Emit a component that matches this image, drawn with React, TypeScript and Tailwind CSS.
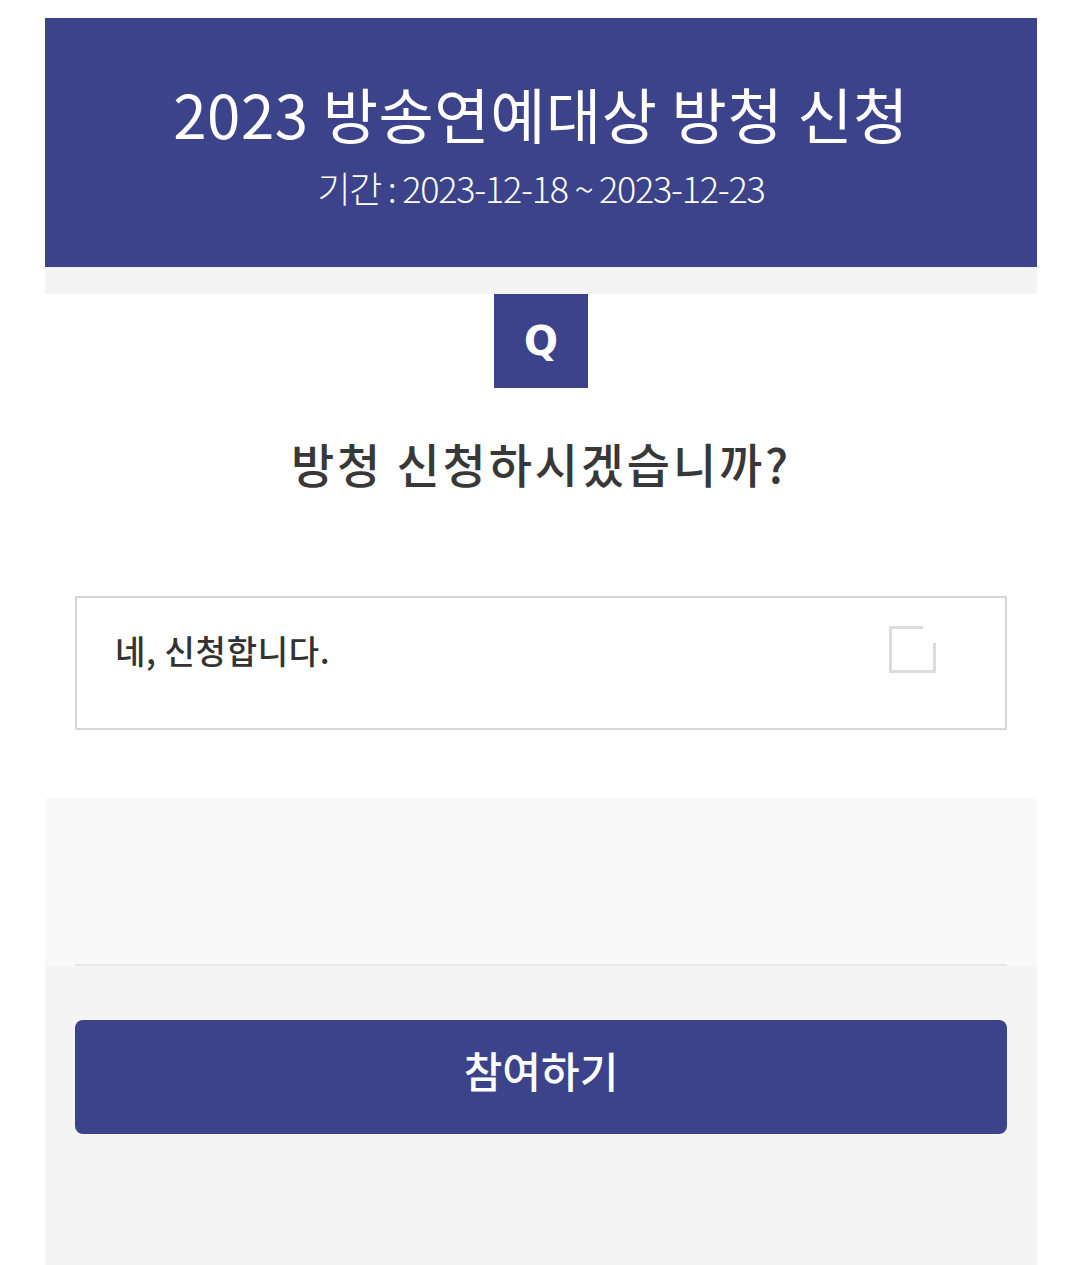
export default function App() {
  return (
    <div
      className="min-h-[1265px] bg-white pl-[45px] pr-[43px] pt-[18px] flex flex-col"
      style={{ fontFamily: '"Noto Sans CJK KR", "Noto Sans", sans-serif' }}
    >
      {/* Header */}
      <header className="h-[249px] bg-[#3c438a] flex flex-col items-center text-white">
        <h1 className="mt-[55px] text-[60px] leading-[80px] font-normal tracking-[0.01em]">
          2023 방송연예대상 방청 신청
        </h1>
        <p className="mt-[11px] text-[36px] leading-[46px] font-light tracking-[-0.035em]">
          기간 : 2023-12-18 ~ 2023-12-23
        </p>
      </header>
      <div className="h-[27px] bg-[#f4f4f4]" />

      {/* Question */}
      <section className="bg-white flex flex-col items-center pb-[68px]">
        <div className="w-[94px] h-[94px] bg-[#3c438a] flex items-center justify-center">
          <span className="text-white text-[40px] font-bold" style={{ fontFamily: '"DejaVu Sans", sans-serif' }}>
            Q
          </span>
        </div>
        <h2 className="mt-[44px] text-[47px] leading-[62px] font-medium text-[#383838] tracking-[0.06em]">
          방청 신청하시겠습니까?
        </h2>
        <label className="mt-[102px] self-stretch mx-[30px] h-[134px] border-2 border-[#d6d6d6] bg-white flex items-start justify-between pl-[38px] pr-[69px] pt-[28px]">
          <span className="text-[33px] leading-[48px] font-medium text-[#333] tracking-[0.02em]">
            네, 신청합니다.
          </span>
          <svg width="47" height="47" viewBox="0 0 47 47">
            <polyline points="34,1.5 1.5,1.5 1.5,45.5 45.5,45.5 45.5,17" fill="none" stroke="#dcdcdc" strokeWidth="3" />
          </svg>
        </label>
      </section>

      {/* Empty area */}
      <div className="h-[168px] bg-[#f9f9f9] flex flex-col justify-end">
        <div className="mx-[30px] h-[2px] bg-[#e6e6e6]" />
      </div>

      {/* Submit */}
      <div className="flex-1 bg-[#f4f4f4] px-[30px] pt-[54px]">
        <button className="w-full h-[114px] rounded-[8px] bg-[#3c438a] text-white text-[42px] leading-[50px] font-medium tracking-[0em] pb-[14px]">
          참여하기
        </button>
      </div>
    </div>
  );
}
